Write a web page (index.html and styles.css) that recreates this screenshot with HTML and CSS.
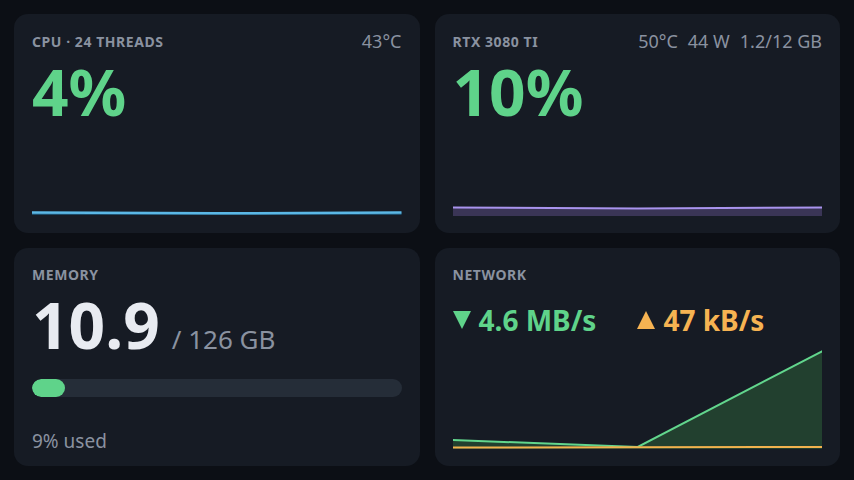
FILE: index.html
```html
<!DOCTYPE html>
<html lang="en">
<head>
<meta charset="UTF-8">
<meta name="viewport" content="width=device-width, initial-scale=1.0">
<title>System Monitor</title>
<link rel="stylesheet" href="styles.css">
</head>
<body>

<div class="grid">

  <div class="card">
    <div class="cabecera">
      <span class="etiqueta">CPU &middot; 24 threads</span>
      <span class="meta">43°C</span>
    </div>
    <div class="valor verde">4%</div>
    <svg class="grafica" viewBox="0 0 370 80" preserveAspectRatio="none">
      <polygon points="0,77.5 185,78.3 370,77.5 370,80 0,80" fill="#1d4a66"/>
      <polyline points="0,77.5 185,78.3 370,77.5" fill="none" stroke="#5bb8e6" stroke-width="2.5"/>
    </svg>
  </div>

  <div class="card">
    <div class="cabecera">
      <span class="etiqueta">RTX 3080 Ti</span>
      <span class="meta"><span>50°C</span><span>44 W</span><span>1.2/12 GB</span></span>
    </div>
    <div class="valor verde">10%</div>
    <svg class="grafica gpu" viewBox="0 0 370 80" preserveAspectRatio="none">
      <polygon points="0,71.5 185,72.5 370,71.5 370,80 0,80" fill="#3a3556"/>
      <polyline points="0,71.5 185,72.5 370,71.5" fill="none" stroke="#a994ee" stroke-width="2"/>
    </svg>
  </div>

  <div class="card">
    <div class="cabecera">
      <span class="etiqueta">Memory</span>
    </div>
    <div class="memoria">
      <span class="valor blanco">10.9</span>
      <span class="total">/ 126 GB</span>
    </div>
    <div class="barra"><div class="relleno" style="width: 9%"></div></div>
    <div class="pie">9% used</div>
  </div>

  <div class="card">
    <div class="cabecera">
      <span class="etiqueta">Network</span>
    </div>
    <div class="tasas">
      <span class="tasa verde">
        <svg class="flecha" viewBox="0 0 18 18"><polygon points="0,0 18,0 9,18" fill="#5fd38a"/></svg>4.6 MB/s
      </span>
      <span class="tasa naranja">
        <svg class="flecha" viewBox="0 0 18 18"><polygon points="0,18 18,18 9,0" fill="#f6b352"/></svg>47 kB/s
      </span>
    </div>
    <svg class="grafica red" viewBox="0 0 370 100" preserveAspectRatio="none">
      <polygon points="0,91 185,98 370,2 370,100 0,100" fill="#22402f"/>
      <polyline points="0,91 185,98 370,2" fill="none" stroke="#62d68d" stroke-width="2"/>
      <polyline points="0,98.6 370,98" fill="none" stroke="#f2b24e" stroke-width="2"/>
    </svg>
  </div>

</div>

</body>
</html>
```

FILE: styles.css
```css
body {
  margin: 0;
  padding: 0;
  background: #0c0f15;
  font-family: "Noto Sans", "Open Sans", sans-serif;
  color: #e6e9ef;
}

.grid {
  box-sizing: border-box;
  height: 480px;
  padding: 14px;
  display: grid;
  grid-template-columns: 1fr 1fr;
  grid-template-rows: 1fr 1fr;
  gap: 15px;
}

.card {
  background: #161b24;
  border-radius: 14px;
  padding: 18px;
  display: flex;
  flex-direction: column;
  min-width: 0;
}

.cabecera {
  display: flex;
  justify-content: space-between;
  align-items: center;
  height: 18px;
}

.etiqueta {
  font-size: 14px;
  font-weight: 700;
  color: #8a92a0;
  text-transform: uppercase;
  letter-spacing: 0.04em;
}

.meta {
  font-size: 18px;
  color: #8a92a0;
  display: flex;
  gap: 10px;
}

.valor {
  font-size: 64px;
  font-weight: 700;
  line-height: 1;
  margin-top: 10px;
}

.verde {
  color: #5fd38a;
}

.naranja {
  color: #f6b352;
}

.blanco {
  color: #e8ebf1;
}

.grafica {
  display: block;
  width: 100%;
  height: 80px;
  margin-top: auto;
}

.grafica.gpu {
  margin-bottom: -1px;
}

.memoria {
  display: flex;
  align-items: baseline;
  gap: 12px;
  margin-top: 9px;
}

.memoria .valor {
  margin-top: 0;
}

.total {
  font-size: 26px;
  color: #8a92a0;
}

.barra {
  height: 18px;
  background: #252d38;
  border-radius: 9px;
  margin-top: 22px;
  overflow: hidden;
}

.relleno {
  height: 100%;
  background: #5fd38a;
  border-radius: 9px;
}

.pie {
  margin-top: auto;
  font-size: 19px;
  color: #8a92a0;
  line-height: 1;
  margin-bottom: -3px;
}

.tasas {
  display: flex;
  gap: 41px;
  margin-top: 22px;
}

.tasa {
  font-size: 28px;
  font-weight: 700;
  line-height: 1;
  display: flex;
  align-items: center;
  gap: 8px;
}

.flecha {
  width: 18px;
  height: 18px;
}

.grafica.red {
  height: 100px;
  margin-bottom: -1px;
}
```
